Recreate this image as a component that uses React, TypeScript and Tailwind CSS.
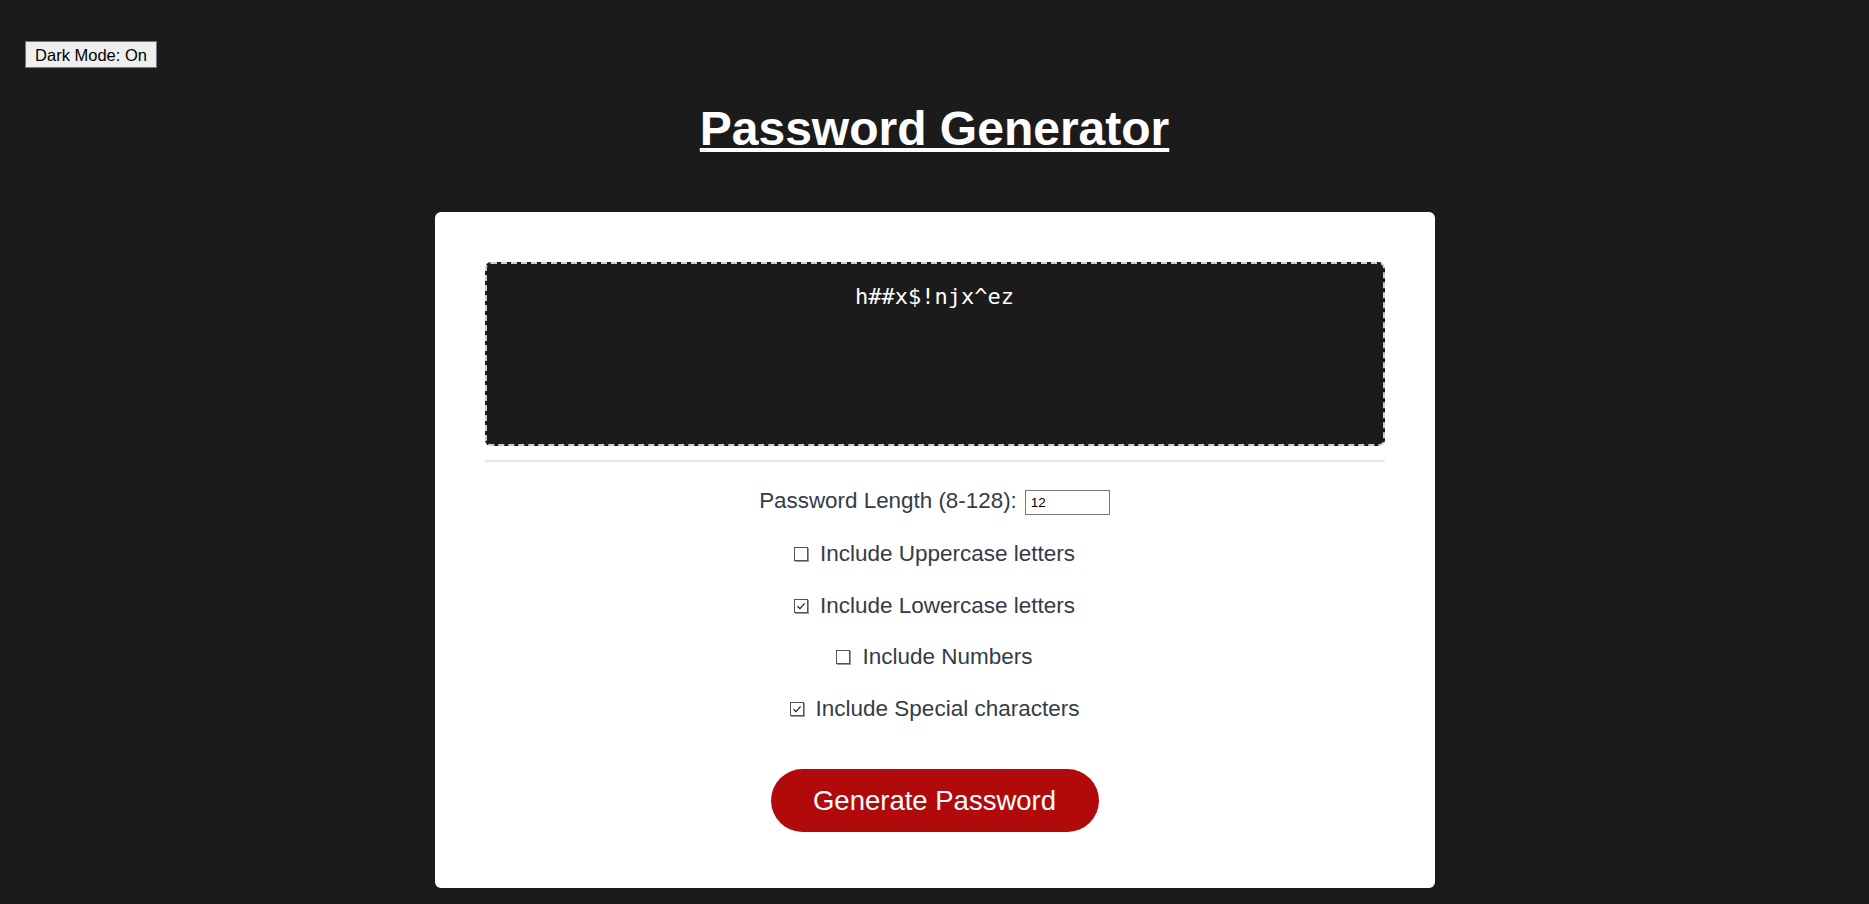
import React, { useState } from 'react';

const sans = { fontFamily: '"Liberation Sans", Arial, sans-serif' };

function CheckBox({ checked }: { checked: boolean }) {
    return (
        <span className="w-[14px] h-[14px] border border-[#555] shadow-[1px_1px_0_#9a9a9a] bg-white flex items-center justify-center shrink-0">
            {checked && (
                <svg width="10" height="10" viewBox="0 0 10 10">
                    <path
                        d="M1.5 5.2 L4 7.6 L8.6 2.4"
                        fill="none"
                        stroke="#222"
                        strokeWidth="1.3"
                    />
                </svg>
            )}
        </span>
    );
}

export default function App() {
    const [length, setLength] = useState('12');
    const options = [
        { label: 'Include Uppercase letters', checked: false, mt: 'mt-[27px]' },
        { label: 'Include Lowercase letters', checked: true, mt: 'mt-[26px]' },
        { label: 'Include Numbers', checked: false, mt: 'mt-[25px]' },
        { label: 'Include Special characters', checked: true, mt: 'mt-[26px]' },
    ];

    return (
        <div className="min-h-screen bg-[#1b1b1b] pt-[41px] pb-[12px]" style={sans}>
            <button
                type="button"
                className="ml-[25px] w-[132px] h-[27px] bg-[#efefef] border border-[#767676] text-[16.5px] leading-[18px] text-black flex items-center justify-center"
            >
                Dark Mode: On
            </button>

            <h1 className="mt-[33px] text-center text-white font-bold text-[48px] leading-[55px] underline">
                Password Generator
            </h1>

            <div className="mt-[56px] w-[1000px] mx-auto bg-white rounded-[6px] px-[50px] pt-[50px] pb-[56px]">
                <div
                    className="h-[184px] border-2 border-dashed border-[#c8cfd8] rounded-[6px] bg-[#1b1b1b] text-center pt-[20px] text-white text-[22px] leading-[26px]"
                    style={{ fontFamily: '"DejaVu Sans Mono", "Liberation Mono", monospace' }}
                >
                    h##x$!njx^ez
                </div>
                <div className="mt-[14px] h-[2px] bg-[#e6e6e6]" />

                <div className="flex flex-col items-center text-[22.5px] leading-[26px] text-[#343b46]">
                    <div className="mt-[26px] h-[26px] flex items-center">
                        <span className="text-[22.4px]">Password Length (8-128):</span>
                        <input
                            type="text"
                            value={length}
                            onChange={(e) => setLength(e.target.value)}
                            className="ml-[8px] mt-[3px] w-[85px] h-[25px] border border-[#767676] px-[5px] text-[13.5px] leading-[15px] text-black outline-none"
                            style={sans}
                        />
                    </div>

                    {options.map((opt) => (
                        <label
                            key={opt.label}
                            className={`${opt.mt} h-[26px] flex items-center gap-[12px]`}
                        >
                            <CheckBox checked={opt.checked} />
                            <span>{opt.label}</span>
                        </label>
                    ))}

                    <button
                        type="button"
                        className="mt-[47px] w-[328px] h-[63px] rounded-full bg-[#b00a0a] text-white text-[27.5px] leading-[31px] flex items-center justify-center"
                    >
                        Generate Password
                    </button>
                </div>
            </div>
        </div>
    );
}
